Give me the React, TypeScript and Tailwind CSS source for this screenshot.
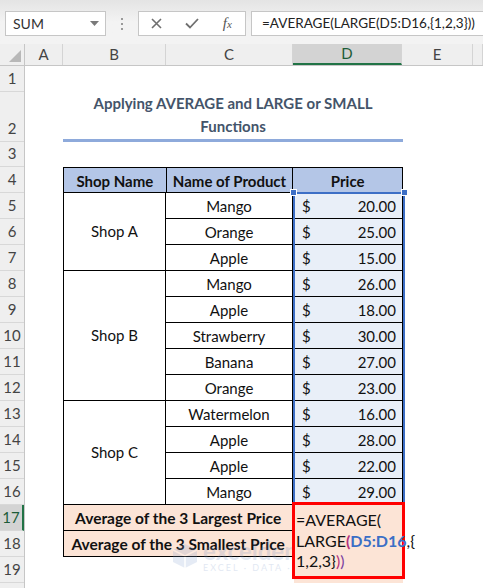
import React from 'react';

const SHOPS = [
  {
    name: 'Shop A',
    items: [
      ['Mango', '20.00'],
      ['Orange', '25.00'],
      ['Apple', '15.00'],
    ],
  },
  {
    name: 'Shop B',
    items: [
      ['Mango', '26.00'],
      ['Apple', '18.00'],
      ['Strawberry', '30.00'],
      ['Banana', '27.00'],
      ['Orange', '23.00'],
    ],
  },
  {
    name: 'Shop C',
    items: [
      ['Watermelon', '16.00'],
      ['Apple', '28.00'],
      ['Apple', '22.00'],
      ['Mango', '29.00'],
    ],
  },
];

const ROW_HEADS = [
  { n: 1, h: 'h-[26px]' },
  { n: 2, h: 'h-[50px]' },
  { n: 3, h: 'h-[25px]' },
  ...Array.from({ length: 16 }, (_, i) => ({ n: i + 4, h: 'h-[26px]' })),
];

const COLS = [
  { l: 'A', w: 'w-[38px]' },
  { l: 'B', w: 'w-[103px]' },
  { l: 'C', w: 'w-[127px]' },
  { l: 'D', w: 'w-[109px]', active: true },
  { l: 'E', w: 'w-[71px]' },
  { l: '', w: 'flex-1' },
];

function TopBar() {
  return (
    <div className="h-[44px] bg-gradient-to-b from-[#e4e4e4] via-[#f3f3f3] to-[#f3f3f3] flex items-start pt-[11px] pl-[5px]">
      <div className="w-[101px] h-[25px] bg-white border border-[#c6c6c6] flex items-center justify-between pl-[7px] pr-[6px]">
        <span className="text-[14px] text-[#333]">SUM</span>
        <svg width="9" height="5" viewBox="0 0 9 5">
          <path d="M0 0h9L4.5 5z" fill="#7a7a7a" />
        </svg>
      </div>
      <div className="w-[32px] h-[25px] flex flex-col items-center justify-center gap-[3px]">
        <span className="w-[2px] h-[2px] bg-[#9a9a9a]" />
        <span className="w-[2px] h-[2px] bg-[#9a9a9a]" />
        <span className="w-[2px] h-[2px] bg-[#9a9a9a]" />
      </div>
      <div className="w-[108px] h-[25px] bg-white border border-[#c6c6c6] flex items-center">
        <div className="w-[36px] flex justify-center">
          <svg width="11" height="11" viewBox="0 0 11 11">
            <path d="M1 1l9 9M10 1l-9 9" stroke="#6f6f6f" strokeWidth="1.6" />
          </svg>
        </div>
        <div className="w-[36px] flex justify-center">
          <svg width="14" height="11" viewBox="0 0 14 11">
            <path d="M1 5.5l4 4L13 1" stroke="#6f6f6f" strokeWidth="1.8" fill="none" />
          </svg>
        </div>
        <div className="w-[36px] flex justify-center">
          <span className="font-['Liberation_Serif',serif] italic text-[15px] text-[#555] leading-none">
            f<span className="text-[11px]">x</span>
          </span>
        </div>
      </div>
      <div className="ml-[5px] flex-1 min-w-0 h-[25px] bg-white border border-[#c6c6c6] border-r-0 flex items-center pl-[10px] overflow-hidden">
        <span className="text-[13.5px] text-[#222] whitespace-nowrap">=AVERAGE(LARGE(D5:D16,{'{'}1,2,3{'}'}))</span>
      </div>
    </div>
  );
}

function ColumnHeaders() {
  return (
    <div className="h-[22px] flex bg-[#efefef] border-b border-[#c6c6c6]">
      <div className="w-[25px] shrink-0 border-r border-[#c6c6c6] relative">
        <svg className="absolute right-[3px] bottom-[3px]" width="12" height="12" viewBox="0 0 12 12">
          <path d="M12 0v12H0z" fill="#b8b8b8" />
        </svg>
      </div>
      {COLS.map((c) => (
        <div
          key={c.l + c.w}
          className={`${c.w} shrink-0 border-r border-[#d4d4d4] flex items-center justify-center text-[15px] ${
            c.active ? 'bg-[#d3d3d3] border-b-2 border-b-[#217346] text-[#1d5c38]' : 'text-[#444]'
          }`}
        >
          {c.l}
        </div>
      ))}
    </div>
  );
}

function RowHeaders() {
  return (
    <div className="w-[25px] shrink-0 flex flex-col bg-[#efefef] border-r border-[#c6c6c6]">
      {ROW_HEADS.map((r) => (
        <div
          key={r.n}
          className={`${r.h} shrink-0 border-b border-[#d8d8d8] flex items-end justify-center pb-[2px] text-[15px] ${
            r.n === 17 ? 'bg-[#d3d3d3] border-r-2 border-r-[#217346] text-[#1d5c38]' : 'text-[#444]'
          }`}
        >
          {r.n}
        </div>
      ))}
      <div className="h-[10px]" />
    </div>
  );
}

function PriceCell({ v }: { v: string }) {
  return (
    <div className="w-[110px] h-[26px] bg-[#e9eff8] border-r border-b border-black flex items-center justify-between pl-[9px] pr-[6px] pt-[2px]">
      <span>$</span>
      <span>{v}</span>
    </div>
  );
}

export default function App() {
  return (
    <div className="w-[483px] h-[588px] overflow-hidden bg-white font-['Lato','Noto_Sans',sans-serif] text-[#111]">
      <TopBar />
      <ColumnHeaders />
      <div className="flex">
        <RowHeaders />
        <div className="flex-1 pl-[38px] text-[15px]">
          <div className="h-[26px]" />
          <div className="w-[340px] h-[50px] border-b-[3px] border-[#8eaadb] flex flex-col items-center justify-center font-bold text-[#44546a] leading-[23px] pb-[2px]">
            <span>Applying AVERAGE and LARGE or SMALL</span>
            <span>Functions</span>
          </div>
          <div className="h-[25px]" />

          <div className="w-[340px] border-l border-black">
            <div className="flex h-[26px] bg-[#b4c6e7] border-t border-black font-bold">
              <div className="w-[103px] border-r border-b border-black flex items-center justify-center pt-[2px]">
                Shop Name
              </div>
              <div className="w-[127px] border-r border-b border-black flex items-center justify-center pt-[2px]">
                Name of Product
              </div>
              <div className="w-[110px] border-r border-b border-black flex items-center justify-center pt-[2px]">
                Price
              </div>
            </div>

            <div className="relative">
              {SHOPS.map((s) => (
                <div key={s.name} className="flex">
                  <div className="w-[103px] border-r border-b border-black flex items-center justify-center">
                    {s.name}
                  </div>
                  <div className="flex flex-col">
                    {s.items.map(([p, v], i) => (
                      <div key={i} className="flex">
                        <div className="w-[127px] h-[26px] border-r border-b border-black flex items-center justify-center pt-[2px]">
                          {p}
                        </div>
                        <PriceCell v={v} />
                      </div>
                    ))}
                  </div>
                </div>
              ))}
              <div className="absolute top-[-1px] bottom-0 left-[229px] w-[112px] border-2 border-[#3d6fc6] pointer-events-none" />
              <div className="absolute top-[-4px] left-[226px] w-[7px] h-[7px] bg-[#3d6fc6] border border-white" />
              <div className="absolute top-[-4px] left-[337px] w-[7px] h-[7px] bg-[#3d6fc6] border border-white" />
            </div>

            <div className="relative">
              {['Average of the 3 Largest Price', 'Average of the 3 Smallest Price'].map((t) => (
                <div key={t} className="flex h-[26px]">
                  <div className="w-[230px] bg-[#fce4d6] border-r border-b border-black flex items-center justify-center font-bold text-[15.5px] pt-[2px]">
                    {t}
                  </div>
                  <div className="w-[110px] bg-[#fce4d6] border-r border-b border-black" />
                </div>
              ))}
              <div className="absolute left-[107px] top-[34px] flex items-center gap-[4px] opacity-20 pointer-events-none">
                <svg width="28" height="26" viewBox="0 0 28 26">
                  <path d="M14 1l12 6v12l-12 6L2 19V7z" fill="#7f9fd0" />
                  <path d="M14 13l12-6M14 13v12M14 13L2 7" stroke="#fff" strokeWidth="1.5" />
                </svg>
                <div className="flex flex-col leading-none">
                  <span className="text-[24px] font-bold text-[#6f8fc4]">exceldemy</span>
                  <span className="text-[9px] tracking-[2px] text-[#6f8fc4]">EXCEL · DATA · BI</span>
                </div>
              </div>
              <div className="absolute top-0 left-[230px] w-[109px] h-[78px] bg-[#fce4d6]" />
              <div className="absolute top-[-3px] left-[228px] w-[113px] h-[77px] border-[3px] border-[#ff0000] pl-[1px] pt-[5px] leading-[20.5px] text-[16px] whitespace-nowrap">
                <div>=AVERAGE(</div>
                <div>
                  LARGE<span className="text-[#b3337f] font-bold">(</span>
                  <span className="text-[#3b6fc6] font-bold">D5:D16</span>,{'{'}
                </div>
                <div>
                  1,2,3{'}'}<span className="text-[#b3337f]">)</span>
                  <span className="text-[#7a3fa0]">)</span>
                </div>
              </div>
            </div>
          </div>
        </div>
      </div>
    </div>
  );
}
